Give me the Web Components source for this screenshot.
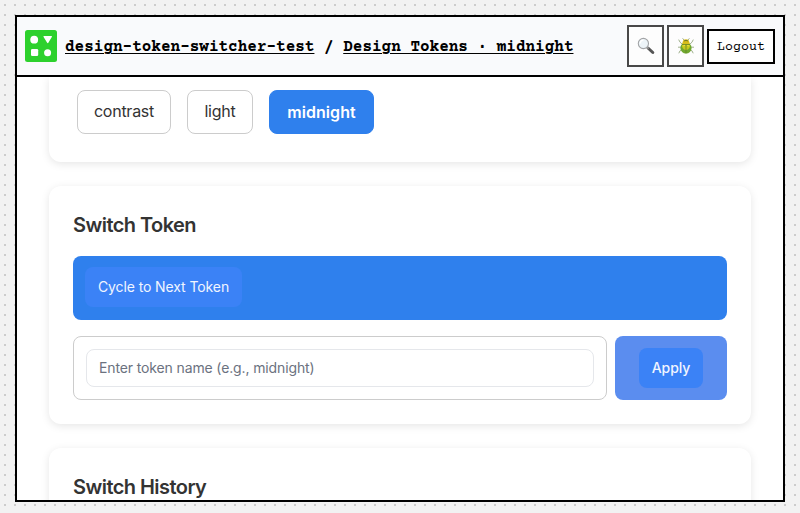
<!DOCTYPE html>
<html lang="en">
<head>
<meta charset="utf-8">
<title>Design Tokens</title>
<style>
html,body{margin:0;height:100%;overflow:hidden}
body{box-sizing:border-box;padding:15px 15px 11px;background:#f2f2f2 conic-gradient(from 90deg at 8px 8px,#ccc 0 25%,transparent 0) -4px -4px/10px 10px;color:#333;font-family:Inter,sans-serif}
</style>
</head>
<body>
<app-window>
  <app-header slot="header"></app-header>
  <token-card style="height:85px;padding-top:0;border-radius:0 0 12px 12px">
    <token-list></token-list>
  </token-card>
  <token-card heading="Switch Token" style="height:238px"><switch-form></switch-form></token-card>
  <token-card heading="Switch History" style="height:200px"></token-card>
</app-window>
<script>
function define(name, html, setup) {
  customElements.define(name, class extends HTMLElement {
    connectedCallback() {
      if (this.shadowRoot) return;
      const t = document.createElement('template');
      t.innerHTML = '<style>*{box-sizing:border-box}</style>' + html;
      this.attachShadow({mode: 'open'}).append(t.content.cloneNode(true));
      if (setup) setup(this);
    }
  });
}
define('app-window', `<style>
:host{box-sizing:border-box;display:flex;flex-direction:column;height:487px;border:2px solid #000;background:#fff;overflow:hidden}
main{flex:1;min-height:0;overflow:hidden;display:flex;flex-direction:column;gap:24px;padding:0 32px}
</style><slot name="header"></slot><main><slot></slot></main>`);
define('app-logo', `<style>:host{display:block;width:32px;height:32px}svg{display:block}</style>
<svg width="32" height="32" viewBox="0 0 32 32"><rect width="32" height="32" rx="2.5" fill="#2dd12d"/><g fill="#fff"><circle cx="9.2" cy="9.7" r="3.9"/><path d="M19.2 6h7c.7 0 .9.6.6 1.1l-3.3 5.5c-.4.7-1.1.7-1.5 0l-3.4-5.5c-.3-.5 0-1.1.6-1.1z"/><rect x="6" y="19" width="7.2" height="7" rx="1.3"/><circle cx="22.6" cy="22.7" r="3.5"/></g></svg>`);
define('icon-search', `<style>:host,svg{display:block}</style>
<svg width="18" height="18" viewBox="0 0 18 18"><path d="M11 11l4.8 4.5" stroke="#555" stroke-width="3" stroke-linecap="round"/><path d="M9.8 9.9l1.8 1.7" stroke="#999" stroke-width="1.5"/><circle cx="6.4" cy="6.5" r="5.1" fill="#edf4f8" stroke="#a2a4a6" stroke-width="1.1"/><path d="M3.2 6.4a3.3 3.3 0 0 1 3.2-3.2" fill="none" stroke="#fff" stroke-width="1.2"/></svg>`);
define('icon-bug', `<style>:host,svg{display:block}</style>
<svg width="18" height="18" viewBox="0 0 18 18"><g fill="none" stroke="#8a9e72" stroke-width=".8"><path d="M5 7L3 5.2 1.7 2.6M13 7l2-1.8 1.3-2.6M4 10.2H1M14 10.2h3M5 13l-2 .8-1.2 2.5M13 13l2 .8 1.2 2.5M7 3L5.6 1.3M11 3l1.4-1.7"/></g><ellipse cx="9" cy="11" rx="5.6" ry="5.5" fill="#70a82e"/><path d="M5 8.1c2-1.6 6-1.6 8 0 .4 2.5-1.2 4.7-4 5-2.8-.3-4.4-2.5-4-5z" fill="#c7c81c"/><path d="M5.6 5.2C6 2.8 7.4 2.2 9 2.2s3 .6 3.4 3L13 7.5H5z" fill="#d8bd19"/><path d="M7 4.1c1-.8 3-.8 4 0" stroke="#6e762a" fill="none"/><path d="M5 7.5h8M9 7.5v9" stroke="#68832a" stroke-width=".8"/><path d="M6.1 9.2c.4-.6 1-.8 1.7-.8M10.4 8.5c.8 0 1.2.2 1.6.7" stroke="#f1eb4b" fill="none"/></svg>`);
define('app-header', `<style>
:host{flex:none;box-sizing:border-box;height:60px;border-bottom:2px solid #000;background:#f9fafc;display:flex;align-items:center;padding:0 8px;color:#000;font-family:"Courier Prime","Liberation Mono",monospace}
nav{flex:1;margin-left:8px;padding-top:2px;font-size:16px;font-weight:700;line-height:20px;white-space:pre;letter-spacing:0}
a{text-decoration:underline;text-decoration-thickness:1px;text-underline-offset:2px;color:inherit}
.actions{display:flex;align-items:center;gap:3px}
.icon{width:37px;height:42px;border:2px solid #484848;background:#fdfdfd;display:grid;place-items:center;padding:0}
.logout{width:68px;height:35px;border:2px solid #000;background:#fff;color:#000;font:13.33px "Courier Prime","Liberation Mono",monospace;padding:3px 0 0}
</style><app-logo></app-logo><nav><a>design-token-switcher-test</a> / <a>Design Tokens · midnight</a></nav>
<div class="actions"><button class="icon" aria-label="Search"><icon-search></icon-search></button><button class="icon" aria-label="Debug"><icon-bug></icon-bug></button><button class="logout">Logout</button></div>`);
define('token-card', `<style>
:host{flex:none;box-sizing:border-box;display:block;padding:24px;border-radius:12px;background:#fff;box-shadow:0 2px 8px rgba(0,0,0,.1)}
h2{margin:0 0 16px;font-size:20px;line-height:30px;font-weight:600;letter-spacing:-.55px;white-space:nowrap}
</style><h2></h2><slot></slot>`, el => {
  const h = el.shadowRoot.querySelector('h2');
  if (el.getAttribute('heading')) h.textContent = el.getAttribute('heading'); else h.remove();
});
define('token-list', `<style>
:host{display:flex;gap:16px;padding:13px 4px 0}
button{height:44px;border:1px solid #ccc;border-radius:8px;background:#fff;color:#333;font:16px Inter,sans-serif;letter-spacing:-.25px;padding:0 0 2px}
.on{background:#2f80ed;border-color:#2f80ed;color:#fff;font-weight:600;letter-spacing:.05px;padding:0}
</style><button style="width:94px">contrast</button><button style="width:66px">light</button><button class="on" style="width:105px">midnight</button>`);
define('switch-form', `<style>
:host{display:grid;gap:16px}
.bar,.field,.apply{height:64px;border-radius:8px;display:flex;align-items:center}
.bar{background:#2f80ed;padding:0 12px 2px}
button{height:40px;border:0;border-radius:8px;background:#3b82f6;color:#f0f5ff;font:14px Inter,sans-serif;letter-spacing:-.1px;padding:0 0 1px;width:157px}
.row{display:flex;gap:8px}
.field{flex:1;border:1px solid #ccc;padding:12px}
input{width:100%;height:38px;border:1px solid #e5e7eb;border-radius:8px;padding:0 12px 2px;background:#fff;font:14px Inter,sans-serif;letter-spacing:-.13px;outline:0}
input::placeholder{color:#6b7280;opacity:1}
.apply{width:112px;background:#5b8def;justify-content:center}
.apply button{width:64px;font-weight:500;padding-bottom:2px}
</style><div class="bar"><button>Cycle to Next Token</button></div>
<div class="row"><div class="field"><input placeholder="Enter token name (e.g., midnight)"></div><div class="apply"><button>Apply</button></div></div>`);
</script>
</body>
</html>
